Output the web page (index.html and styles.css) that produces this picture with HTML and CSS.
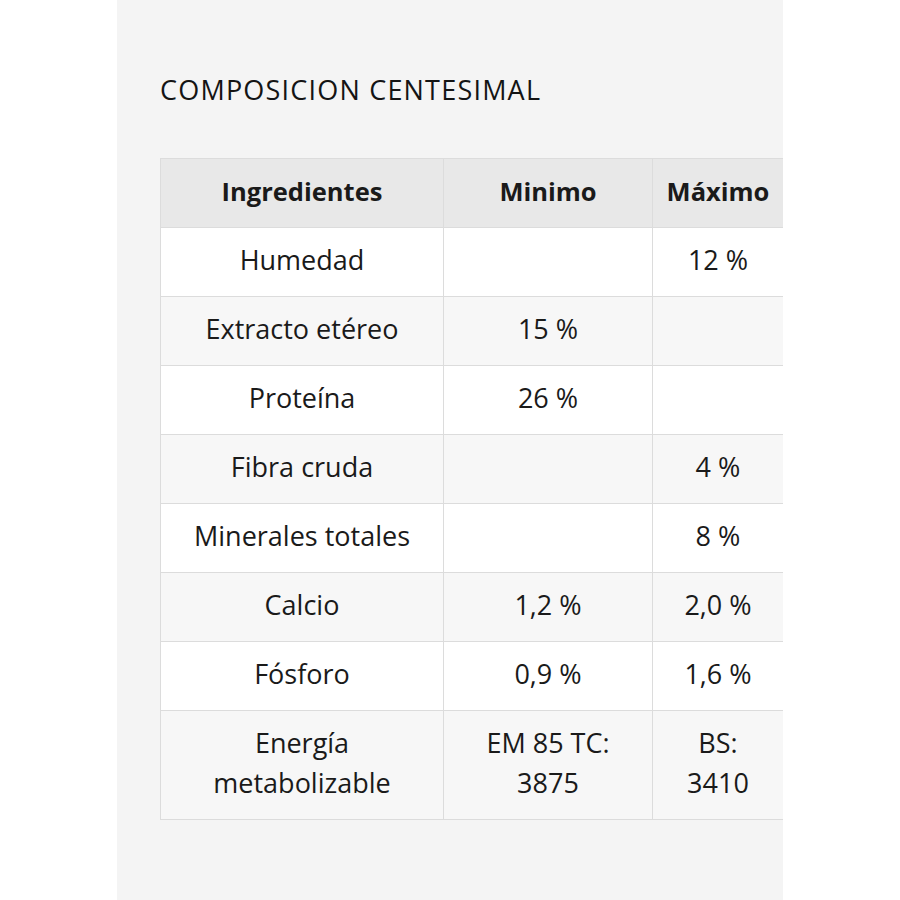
FILE: index.html
```html
<!DOCTYPE html>
<html lang="es">
<head>
<meta charset="utf-8">
<title>Composicion centesimal</title>
<link rel="stylesheet" href="styles.css">
</head>
<body>
<div class="panel">
  <h2 class="title">COMPOSICION CENTESIMAL</h2>
  <div class="table-wrap">
    <table class="comp">
      <colgroup>
        <col class="c1"><col class="c2"><col class="c3">
      </colgroup>
      <thead>
        <tr><th>Ingredientes</th><th>Minimo</th><th>Máximo</th></tr>
      </thead>
      <tbody>
        <tr><td>Humedad</td><td></td><td>12 %</td></tr>
        <tr><td>Extracto etéreo</td><td>15 %</td><td></td></tr>
        <tr><td>Proteína</td><td>26 %</td><td></td></tr>
        <tr><td>Fibra cruda</td><td></td><td>4 %</td></tr>
        <tr><td>Minerales totales</td><td></td><td>8 %</td></tr>
        <tr><td>Calcio</td><td>1,2 %</td><td>2,0 %</td></tr>
        <tr><td>Fósforo</td><td>0,9 %</td><td>1,6 %</td></tr>
        <tr><td>Energía<br>metabolizable</td><td>EM 85 TC:<br>3875</td><td>BS:<br>3410</td></tr>
      </tbody>
    </table>
  </div>
</div>
</body>
</html>
```
FILE: styles.css
```css
html, body {
  margin: 0;
  padding: 0;
  background: #ffffff;
}
body {
  font-family: "Open Sans", "Liberation Sans", sans-serif;
  color: #1a1a1a;
}
.panel {
  margin-left: 117px;
  width: 666px;
  min-height: 900px;
  background: #f4f4f4;
  padding: 70px 0 0 43px;
  box-sizing: border-box;
  overflow: hidden;
}
.title {
  margin: 0;
  font-size: 27px;
  font-weight: 400;
  line-height: 40px;
  letter-spacing: 1.2px;
  color: #141414;
}
.table-wrap {
  margin-top: 48px;
}
.comp {
  border-collapse: collapse;
  table-layout: fixed;
  width: 623px;
  background: #ffffff;
}
.c1 { width: 283px; }
.c2 { width: 209px; }
.c3 { width: 131px; }
.comp th, .comp td {
  border: 1px solid #dcdcdc;
  padding: 12px 6px 16px;
  line-height: 40px;
  font-size: 27px;
  text-align: center;
  vertical-align: middle;
  white-space: nowrap;
}
.comp th {
  background: #e8e8e8;
  font-weight: 700;
  font-size: 25.5px;
}
.comp tbody tr:nth-child(even) td {
  background: #f7f7f7;
}
```
